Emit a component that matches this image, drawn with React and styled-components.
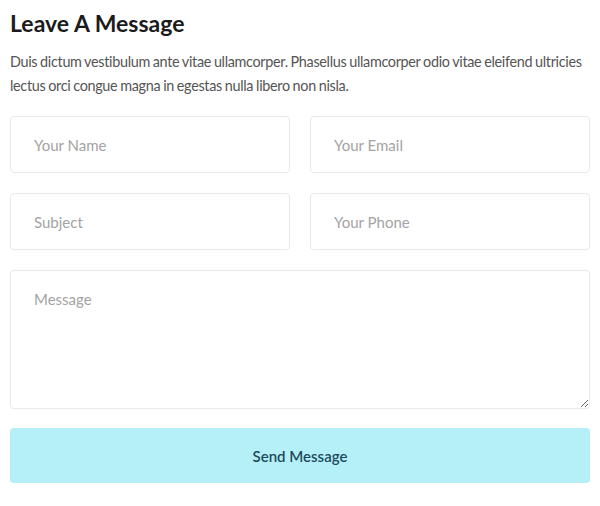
import React from "react";
import styled, { createGlobalStyle } from "styled-components";

const GlobalStyle = createGlobalStyle`
  body {
    margin: 0;
    background: #ffffff;
    font-family: Lato, "Open Sans", sans-serif;
  }
`;

const Wrapper = styled.div`
  padding: 6px 10px 0 10px;
`;

const Title = styled.h2`
  margin: 0;
  font-size: 23px;
  line-height: 34px;
  font-weight: 700;
  color: #1b1b1b;
`;

const Intro = styled.p`
  margin: 10px 0 18px 0;
  font-size: 14.4px;
  letter-spacing: -0.32px;
  word-spacing: -0.5px;
  line-height: 24px;
  color: #555555;
`;

const FormGrid = styled.form`
  display: grid;
  grid-template-columns: 1fr 1fr;
  gap: 20px;
`;

const Field = styled.input`
  box-sizing: border-box;
  width: 100%;
  height: 57px;
  padding: 0 23px;
  border: 1px solid #e9e9e9;
  border-radius: 4px;
  font-family: inherit;
  font-size: 15px;
  color: #333;
  outline: none;
  &::placeholder {
    color: #a3a3a3;
  }
`;

const MessageBox = styled.textarea`
  grid-column: 1 / -1;
  box-sizing: border-box;
  width: 100%;
  height: 139px;
  padding: 19px 23px;
  border: 1px solid #e9e9e9;
  border-radius: 4px;
  font-family: inherit;
  font-size: 15px;
  color: #333;
  outline: none;
  &::placeholder {
    color: #a3a3a3;
  }
`;

const SendButton = styled.button`
  grid-column: 1 / -1;
  height: 55px;
  margin-top: -1px;
  border: none;
  border-radius: 4px;
  background: #b5f0f8;
  color: #1e4a5c;
  font-family: inherit;
  font-size: 15px;
  font-weight: 600;
  cursor: pointer;
`;

const App = () => {
  return (
    <Wrapper>
      <GlobalStyle />
      <Title>Leave A Message</Title>
      <Intro>
        Duis dictum vestibulum ante vitae ullamcorper. Phasellus ullamcorper
        odio vitae eleifend ultricies lectus orci congue magna in egestas nulla
        libero non nisla.
      </Intro>
      <FormGrid onSubmit={(e) => e.preventDefault()}>
        <Field type="text" placeholder="Your Name" />
        <Field type="email" placeholder="Your Email" />
        <Field type="text" placeholder="Subject" />
        <Field type="tel" placeholder="Your Phone" />
        <MessageBox placeholder="Message" />
        <SendButton type="submit">Send Message</SendButton>
      </FormGrid>
    </Wrapper>
  );
};

export default App;
